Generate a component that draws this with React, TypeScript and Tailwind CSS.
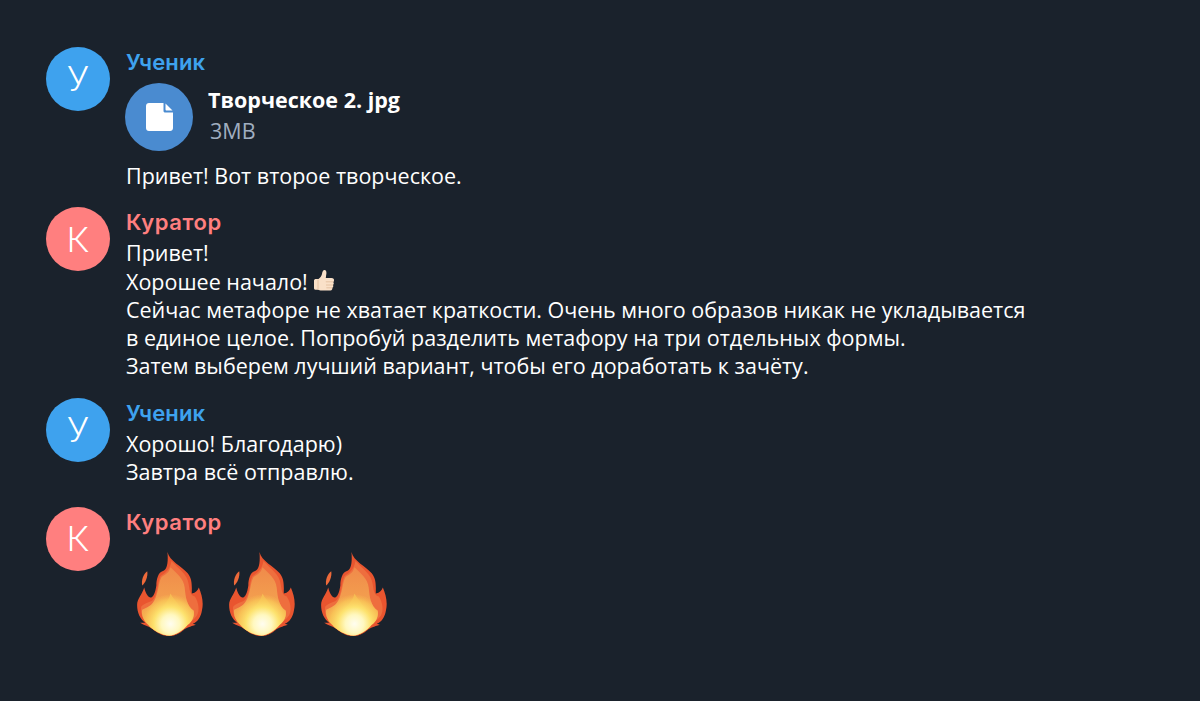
const bodyFont = "font-['Open_Sans',sans-serif]";

function Avatar({ letter, color }: { letter: string; color: string }) {
  return (
    <div className={`w-16 h-16 shrink-0 rounded-full flex items-center justify-center pt-[3px] text-white text-[35px] font-light font-['Roboto',sans-serif] ${color}`}>
      {letter}
    </div>
  );
}

function Flame({ id }: { id: string }) {
  return (
    <svg width="66" height="84" viewBox="0 0 65 83" className="shrink-0">
      <defs>
        <linearGradient id={`${id}-body`} x1="0" y1="0" x2="0" y2="1">
          <stop offset="0" stopColor="#f08a4a" />
          <stop offset="0.5" stopColor="#f3a04f" />
          <stop offset="1" stopColor="#f7bd52" />
        </linearGradient>
        <radialGradient id={`${id}-glow`} cx="33" cy="71" r="30" gradientUnits="userSpaceOnUse">
          <stop offset="0" stopColor="#fffdf0" />
          <stop offset="0.3" stopColor="#fff8c0" />
          <stop offset="0.55" stopColor="#fde26e" />
          <stop offset="0.8" stopColor="#f9c858" stopOpacity="0.75" />
          <stop offset="1" stopColor="#f6b050" stopOpacity="0" />
        </radialGradient>
        <clipPath id={`${id}-clip`}>
          <path d="M33 15C39 21 46 26 47 35C48 45 49 53 56 58C57 64 54 69 50 72C45 78 38 82.500 32 82.500C24 82.500 15 77 11 72C6 67 4 62 5 57C9 55 14 54 17 48C21 41 21 30 24 25C27 22 31 22 33 15Z" />
        </clipPath>
      </defs>
      <path d="M30 0C32 9 44 14 50 21C55 27 54 35 54 41C58 40 60 38 61 35C64 42 66 50 64 58C63 64 60 69 55 71L58 72C52 74 49 75 46 77C41 81 37 83 32 83C25 83 20 80 15 76C11 73 7 73 3 70C5 70 6 70 8 70C3 66 0 60 0 52C0 46 5 42 7 35C8 39 10 44 13 45C16 45 18 40 19 33C19 27 21 20 25 19C29 18 31 13 30 0Z" fill="#e9552f" />
      <path d="M10 19C11 24 8 31 5 33C4 28 6 22 10 19Z" fill="#ee6a3a" />
      <path d="M34 9C40 16 50 22 51 32C52 39 53 43 57 44C61 50 62 58 59 63C56 67 53 69 50 71C44 78 38 82 32 82C24 82 17 78 12 73C6 68 3 60 4 54C8 50 12 50 15 48C20 44 20 30 23 24C27 21 32 19 34 9Z" fill="#ee6e3e" />
      <path d="M33 15C39 21 46 26 47 35C48 45 49 53 56 58C57 64 54 69 50 72C45 78 38 82.500 32 82.500C24 82.500 15 77 11 72C6 67 4 62 5 57C9 55 14 54 17 48C21 41 21 30 24 25C27 22 31 22 33 15Z" fill={`url(#${id}-body)`} />
      <g clipPath={`url(#${id}-clip)`}>
        <path d="M33 41C36 47 42 52 46 60C50 66 46 76 38 83H26C18 77 14 68 19 61C24 54 31 50 33 41Z" fill="#f8c655" opacity="0.8" />
        <ellipse cx="33" cy="70" rx="30" ry="28" fill={`url(#${id}-glow)`} />
      </g>
    </svg>
  );
}

function Thumb() {
  return (
    <svg width="22" height="24" viewBox="0 0 22 24" className="inline-block ml-[5px] align-[-3px]">
      <path d="M1 11.500C1 10.500 2 10 3 10H5.500C7 9 8.500 7 9 5C9.300 3.500 9.500 1.500 11 1C13 .7 13.600 2.500 13.400 4.500C13.300 6 12.800 7.500 12.800 9H18.500C20.500 9 21 10 21 11C21 12 20.800 12.600 20.200 13C21 13.600 21 15.400 20 16C20.600 16.800 20.300 18.400 19.300 18.800C19.600 20 19 21.600 17.400 21.600H8.500C7 21.600 6 21 5 20.800H3C2 20.800 1 20.300 1 19.300Z" fill="#f9e0c8" />
      <path d="M12.800 12.800H20.200M13 16H20M13.400 18.800H19.300M5 10.500V20.600" stroke="#dfba98" strokeWidth=".8" fill="none" />
    </svg>
  );
}

function Message({ letter, avatar, name, nameClass, children, className }: {
  letter: string;
  avatar: string;
  name: string;
  nameClass: string;
  children: React.ReactNode;
  className?: string;
}) {
  return (
    <div className={`flex gap-4 ${className ?? ""}`}>
      <Avatar letter={letter} color={avatar} />
      <div className="min-w-0">
        <div className={`font-['Inter',sans-serif] font-semibold text-[22px] leading-[30px] ${nameClass}`}>{name}</div>
        {children}
      </div>
    </div>
  );
}

export default function App() {
  return (
    <div className={`w-[1200px] h-[701px] overflow-hidden bg-[#1a222c] pt-[47px] pl-[46px] text-white ${bodyFont}`}>
      <Message letter="У" avatar="bg-[#3ea2ee]" name="Ученик" nameClass="text-[#3ea2ee] tracking-[0.15px]">
        <div className="flex items-center gap-[15px] -ml-px mt-[6px]">
          <div className="w-[68px] h-[68px] rounded-full bg-[#4a8bd0] flex items-center justify-center">
            <svg width="27" height="28" viewBox="0 0 27 28">
              <path d="M3 0H17.500V8C17.500 9 18.500 9.500 19.500 9.500H27V25C27 26.700 25.700 28 24 28H3C1.300 28 0 26.700 0 25V3C0 1.300 1.300 0 3 0Z" fill="#fff" />
              <path d="M19.500 .5L26.500 7.500H20.500C19.900 7.500 19.500 7 19.500 6.500Z" fill="#fff" />
            </svg>
          </div>
          <div className="-mt-[3px]">
            <div className="font-bold text-[21.500px] leading-[30px]">Творческое 2. jpg</div>
            <div className="text-[21.500px] leading-[30px] text-[#a0aec0] mt-px ml-[2px]">3MB</div>
          </div>
        </div>
        <div className="text-[21.500px] leading-[28.250px] mt-[11px]">Привет! Вот второе творческое.</div>
      </Message>

      <Message letter="К" avatar="bg-[#ff7f7f]" name="Куратор" nameClass="text-[#ff7f7f] tracking-[0.6px]" className="mt-[17px]">
        <div className="text-[21.500px] leading-[28.250px] w-[960px] mt-[2px]">
          <div>Привет!</div>
          <div>Хорошее начало!<Thumb /></div>
          <div>Сейчас метафоре не хватает краткости. Очень много образов никак не укладывается</div>
          <div>в единое целое. Попробуй разделить метафору на три отдельных формы.</div>
          <div>Затем выберем лучший вариант, чтобы его доработать к зачёту.</div>
        </div>
      </Message>

      <Message letter="У" avatar="bg-[#3ea2ee]" name="Ученик" nameClass="text-[#3ea2ee] tracking-[0.15px]" className="mt-[17px]">
        <div className="text-[21.500px] leading-[28.250px] mt-[2px]">
          <div>Хорошо! Благодарю)</div>
          <div>Завтра всё отправлю.</div>
        </div>
      </Message>

      <Message letter="К" avatar="bg-[#ff7f7f]" name="Куратор" nameClass="text-[#ff7f7f] tracking-[0.6px]" className="mt-[21px]">
        <div className="flex gap-[26px] ml-[11px] mt-[15px]">
          <Flame id="flame-a" />
          <Flame id="flame-b" />
          <Flame id="flame-c" />
        </div>
      </Message>
    </div>
  );
}
